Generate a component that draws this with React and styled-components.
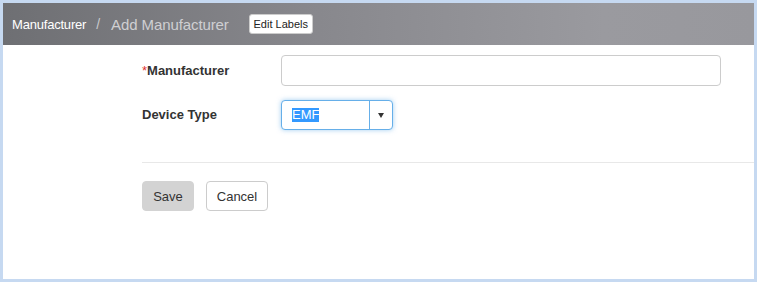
import React from 'react';
import styled, { createGlobalStyle } from 'styled-components';

const GlobalStyle = createGlobalStyle`
  html, body {
    margin: 0;
    padding: 0;
    background: #ffffff;
  }
  body {
    font-family: "Liberation Sans", Arial, sans-serif;
  }
  * {
    box-sizing: border-box;
  }
`;

const Frame = styled.div`
  width: 757px;
  height: 282px;
  border: 3px solid #c6d9f1;
  background: #ffffff;
  display: flex;
  flex-direction: column;
  overflow: hidden;
`;

const Header = styled.div`
  height: 42px;
  flex-shrink: 0;
  display: flex;
  align-items: center;
  padding-left: 9px;
  background: linear-gradient(to right, #6e6f73 0%, #87878c 40%, #9a9a9f 80%, #98989d 100%);
`;

const Crumb = styled.span`
  color: #ffffff;
  font-size: 13px;
  letter-spacing: -0.2px;
`;

const Slash = styled.span`
  color: #c9c9cc;
  font-size: 14px;
  margin: 0 11px 0 10px;
`;

const Title = styled.span`
  color: #cfcfd2;
  font-size: 15px;
  letter-spacing: -0.1px;
`;

const EditLabels = styled.button`
  margin-left: 20px;
  height: 20px;
  width: 64px;
  padding: 0;
  background: #ffffff;
  border: 1px solid #cccccc;
  border-radius: 3px;
  color: #222;
  font-family: "Liberation Sans", Arial, sans-serif;
  font-size: 11px;
`;

const Form = styled.div`
  padding: 10px 0 0 139px;
  display: grid;
  grid-template-columns: 139px auto;
  row-gap: 14px;
  align-items: center;
`;

const Label = styled.label`
  font-size: 13px;
  font-weight: bold;
  color: #333333;
  margin-top: -1px;
`;

const Star = styled.span`
  color: #e0302e;
  font-weight: normal;
`;

const TextInput = styled.input`
  width: 440px;
  height: 31px;
  border: 1px solid #cccccc;
  border-radius: 4px;
  padding: 0 10px;
  font-family: "Liberation Sans", Arial, sans-serif;
  font-size: 13px;
  outline: none;
`;

const SelectBox = styled.div`
  width: 112px;
  height: 30px;
  display: flex;
  border: 1px solid #66afe9;
  border-radius: 4px;
  box-shadow: 0 0 5px rgba(102, 175, 233, 0.6);
  background: #ffffff;
`;

const SelectValue = styled.div`
  flex: 1;
  display: flex;
  align-items: center;
  padding-left: 10px;
`;

const Highlight = styled.span`
  background: #3399ff;
  color: #ffffff;
  font-size: 13px;
  line-height: 14px;
`;

const Arrow = styled.div`
  width: 23px;
  border-left: 1px solid #66afe9;
  display: flex;
  align-items: center;
  justify-content: center;

  &::after {
    content: '';
    border-left: 3.5px solid transparent;
    border-right: 3.5px solid transparent;
    border-top: 5px solid #333333;
    margin-top: 1px;
  }
`;

const Divider = styled.hr`
  margin: 32px 0 0 139px;
  border: 0;
  border-top: 1px solid #e8e8e8;
`;

const Actions = styled.div`
  display: flex;
  gap: 12px;
  padding: 18px 0 0 139px;
`;

const Button = styled.button`
  height: 30px;
  width: ${(props) => props.w}px;
  padding: 0;
  border-radius: 4px;
  border: 1px solid ${(props) => (props.primary ? '#d3d3d3' : '#cccccc')};
  background: ${(props) => (props.primary ? '#d3d3d3' : '#ffffff')};
  color: #333333;
  font-family: "Liberation Sans", Arial, sans-serif;
  font-size: 13px;
`;

export default function App() {
  return (
    <>
      <GlobalStyle />
      <Frame>
        <Header>
          <Crumb>Manufacturer</Crumb>
          <Slash>/</Slash>
          <Title>Add Manufacturer</Title>
          <EditLabels>Edit Labels</EditLabels>
        </Header>
        <Form>
          <Label>
            <Star>*</Star>Manufacturer
          </Label>
          <TextInput />
          <Label>Device Type</Label>
          <SelectBox>
            <SelectValue>
              <Highlight>EMF</Highlight>
            </SelectValue>
            <Arrow />
          </SelectBox>
        </Form>
        <Divider />
        <Actions>
          <Button primary w={52}>Save</Button>
          <Button w={62}>Cancel</Button>
        </Actions>
      </Frame>
    </>
  );
}
